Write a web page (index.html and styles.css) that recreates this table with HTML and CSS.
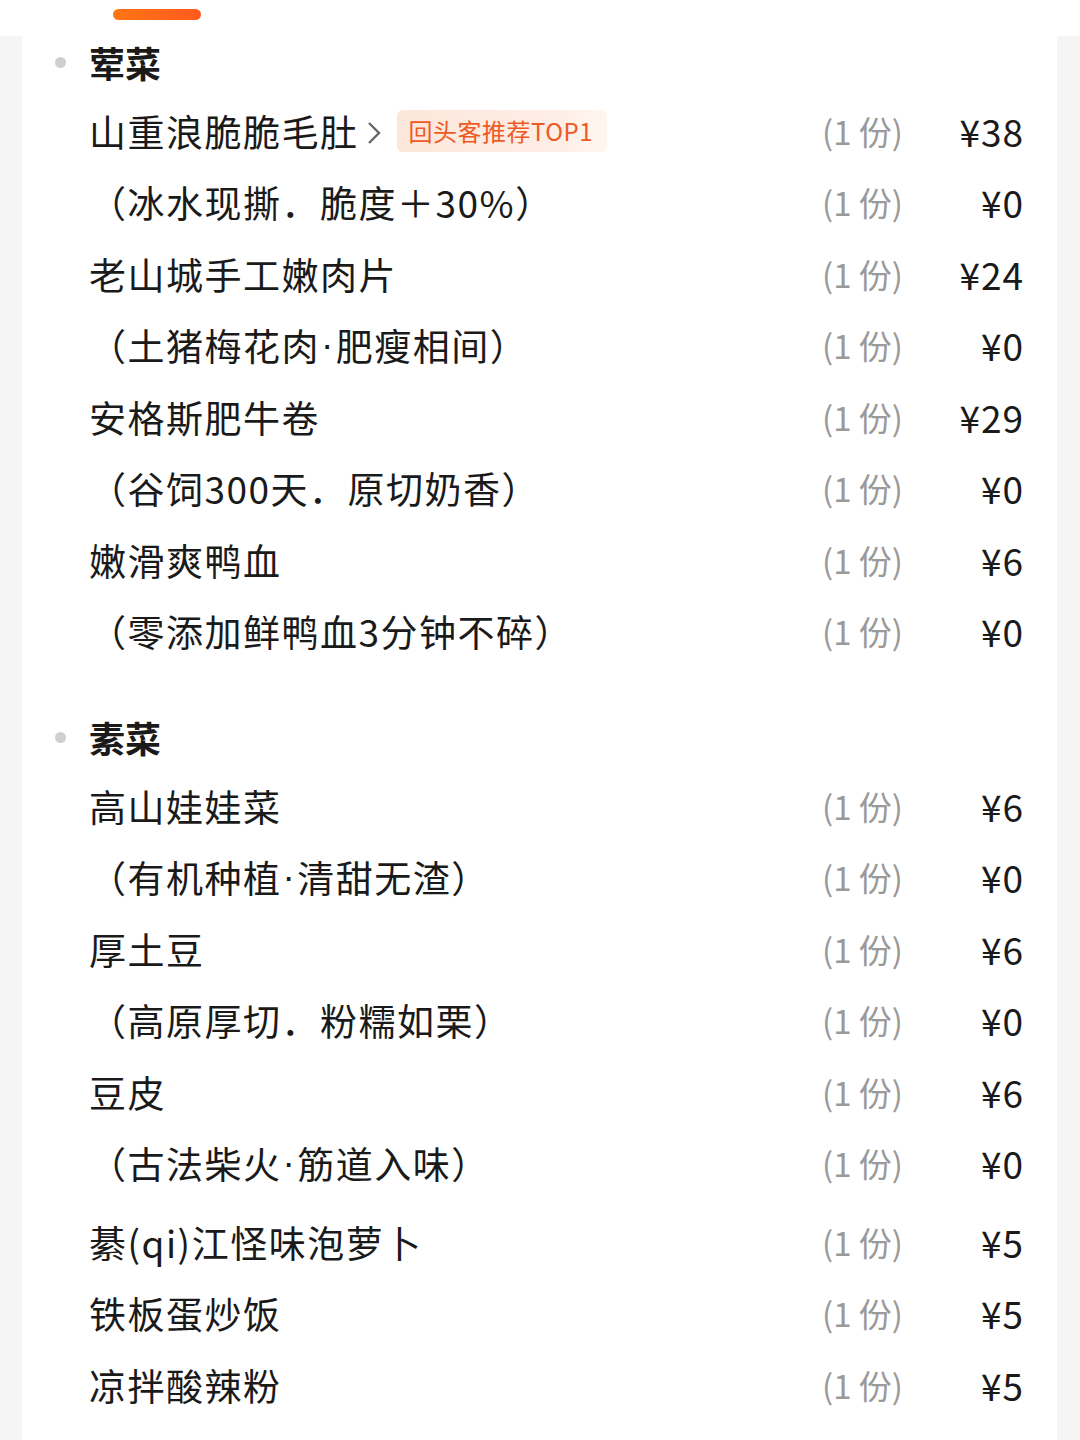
FILE: index.html
```html
<!DOCTYPE html>
<html lang="zh">
<head>
<meta charset="utf-8">
<link rel="stylesheet" href="styles.css">
</head>
<body>
<div class="topbar"><div class="indicator"></div></div>
<div class="card">
  <div class="section">
    <div class="head"><span class="dot"></span><span class="title">荤菜</span></div>
    <div class="row"><div class="name">山重浪脆脆毛肚<svg class="chev" width="16" height="26" viewBox="0 0 16 26"><path d="M3 3 L13 13 L3 23" fill="none" stroke="#666" stroke-width="2.4"/></svg><span class="tag">回头客推荐TOP1</span></div><div class="qty">(1 份)</div><div class="price">¥38</div></div>
    <div class="row"><div class="name">（冰水现撕．脆度＋30%）</div><div class="qty">(1 份)</div><div class="price">¥0</div></div>
    <div class="row"><div class="name">老山城手工嫩肉片</div><div class="qty">(1 份)</div><div class="price">¥24</div></div>
    <div class="row"><div class="name">（土猪梅花肉<span class="mid">·</span>肥瘦相间）</div><div class="qty">(1 份)</div><div class="price">¥0</div></div>
    <div class="row"><div class="name">安格斯肥牛卷</div><div class="qty">(1 份)</div><div class="price">¥29</div></div>
    <div class="row"><div class="name">（谷饲300天．原切奶香）</div><div class="qty">(1 份)</div><div class="price">¥0</div></div>
    <div class="row"><div class="name">嫩滑爽鸭血</div><div class="qty">(1 份)</div><div class="price">¥6</div></div>
    <div class="row"><div class="name">（零添加鲜鸭血3分钟不碎）</div><div class="qty">(1 份)</div><div class="price">¥0</div></div>
  </div>
  <div class="section second">
    <div class="head"><span class="dot"></span><span class="title">素菜</span></div>
    <div class="row"><div class="name">高山娃娃菜</div><div class="qty">(1 份)</div><div class="price">¥6</div></div>
    <div class="row"><div class="name">（有机种植<span class="mid">·</span>清甜无渣）</div><div class="qty">(1 份)</div><div class="price">¥0</div></div>
    <div class="row"><div class="name">厚土豆</div><div class="qty">(1 份)</div><div class="price">¥6</div></div>
    <div class="row"><div class="name">（高原厚切．粉糯如栗）</div><div class="qty">(1 份)</div><div class="price">¥0</div></div>
    <div class="row"><div class="name">豆皮</div><div class="qty">(1 份)</div><div class="price">¥6</div></div>
    <div class="row"><div class="name">（古法柴火<span class="mid">·</span>筋道入味）</div><div class="qty">(1 份)</div><div class="price">¥0</div></div>
  </div>
  <div class="section third">
    <div class="row"><div class="name">綦(qi)江怪味泡萝卜</div><div class="qty">(1 份)</div><div class="price">¥5</div></div>
    <div class="row"><div class="name">铁板蛋炒饭</div><div class="qty">(1 份)</div><div class="price">¥5</div></div>
    <div class="row"><div class="name">凉拌酸辣粉</div><div class="qty">(1 份)</div><div class="price">¥5</div></div>
  </div>
</div>
</body>
</html>
```

FILE: styles.css
```css
html, body {
  margin: 0;
  padding: 0;
}
body {
  background: #f5f5f5;
  font-family: "Noto Sans CJK SC", "Noto Sans", sans-serif;
  color: #1a1a1a;
  width: 1080px;
  height: 1440px;
  overflow: hidden;
}
.topbar {
  height: 36px;
  background: #ffffff;
  padding-left: 113px;
  padding-top: 9px;
  box-sizing: border-box;
}
.indicator {
  width: 88px;
  height: 11px;
  border-radius: 6px;
  background: linear-gradient(90deg, #ff7514, #ff5a1f);
}
.card {
  background: #ffffff;
  margin: 0 23px 0 22px;
  padding: 0 34px 40px 67px;
  height: 1404px;
  overflow: hidden;
}
.head {
  height: 52px;
  display: flex;
  align-items: center;
  position: relative;
}
.dot {
  position: absolute;
  left: -34px;
  top: 21px;
  width: 11px;
  height: 11px;
  border-radius: 50%;
  background: #cfcfcf;
}
.title {
  font-size: 36px;
  font-weight: 700;
  line-height: 52px;
}
.section {
  display: flex;
  flex-direction: column;
}
.head + .row {
  margin-top: 7px;
}
.row {
  display: grid;
  grid-template-columns: 1fr auto 120px;
  align-items: center;
  height: 71.5px;
}
.name {
  font-size: 37px;
  line-height: 52px;
  display: flex;
  align-items: center;
  white-space: nowrap;
  letter-spacing: 1.5px;
}
.mid {
  font-family: "Liberation Sans", sans-serif;
  margin: 0 1px;
}
.chev {
  margin-left: 7px;
  margin-top: 4px;
}
.tag {
  margin-left: 15px;
  height: 42px;
  padding: 0 14px 0 12px;
  border-radius: 6px;
  background: linear-gradient(90deg, #fde6da 0%, #fdeee6 75%, #fff6f1 100%);
  color: #ee5a24;
  font-size: 24px;
  line-height: 42px;
  letter-spacing: 0.5px;
}
.qty {
  font-size: 33px;
  color: #9a9a9a;
  line-height: 52px;
}
.price {
  font-size: 37px;
  text-align: right;
  line-height: 52px;
  letter-spacing: 1px;
  margin-right: -1px;
}
.second {
  margin-top: 44px;
}
.third {
  margin-top: 7px;
}
```
